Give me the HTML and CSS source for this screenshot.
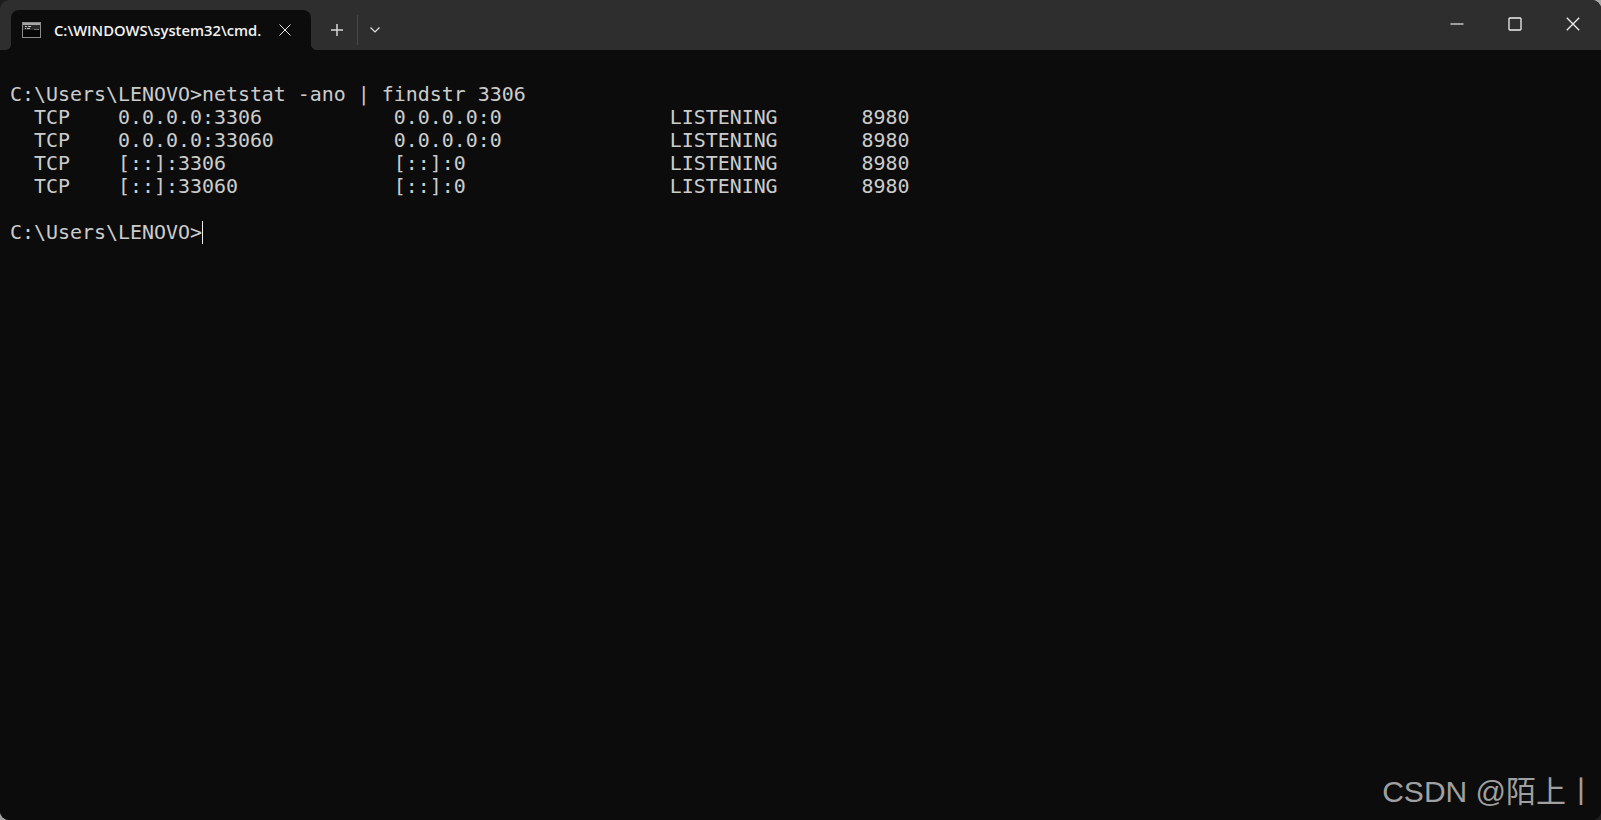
FILE: index.html
```html
<!DOCTYPE html>
<html lang="en">
<head>
<meta charset="utf-8">
<title>cmd</title>
<link rel="stylesheet" href="styles.css">
</head>
<body>
<div class="window">
  <header class="tabbar">
    <div class="tab">
      <svg class="tab-icon" width="19" height="16" viewBox="0 0 19 16">
        <rect x="0.5" y="0.5" width="18" height="15" fill="#060606" stroke="#8c8c8c"/>
        <rect x="1" y="1" width="17" height="2" fill="#a6a6a6"/>
        <rect x="1" y="3" width="17" height="5" fill="#2a2a2a"/>
        <path d="M3 4.5h2M6 4.5h3M3 6.5h1M5 6.5h3" stroke="#c4c4c4" fill="none"/>
        <path d="M12 7.5h5" stroke="#777" fill="none"/>
      </svg>
      <span class="tab-title">C:\WINDOWS\system32\cmd.</span>
      <svg class="tab-close" width="12" height="12" viewBox="0 0 12 12">
        <path d="M0.5 0.5l11 11M11.5 0.5l-11 11" stroke="#e6e6e6" stroke-width="1" fill="none"/>
      </svg>
    </div>
    <div class="tab-actions">
      <svg class="add" width="12" height="12" viewBox="0 0 12 12">
        <path d="M6 0v12M0 6h12" stroke="#d8d8d8" stroke-width="1.5" fill="none"/>
      </svg>
      <span class="divider"></span>
      <svg class="more" width="10" height="6" viewBox="0 0 10 6">
        <path d="M0.5 0.5L5 5l4.5-4.5" stroke="#e0e0e0" stroke-width="1.2" fill="none"/>
      </svg>
    </div>
    <div class="win-controls">
      <svg width="14" height="14" viewBox="0 0 14 14"><path d="M0.5 7h13" stroke="#cfcfcf" stroke-width="1.4" fill="none"/></svg>
      <svg width="14" height="14" viewBox="0 0 14 14"><rect x="1" y="1" width="12" height="12" rx="1" stroke="#f0f0f0" stroke-width="1.3" fill="none"/></svg>
      <svg width="14" height="14" viewBox="0 0 14 14"><path d="M0.8 0.8l12.4 12.4M13.2 0.8L0.8 13.2" stroke="#f0f0f0" stroke-width="1.3" fill="none"/></svg>
    </div>
  </header>
  <main class="console">
<pre class="output">

C:\Users\LENOVO&gt;netstat -ano | findstr 3306
  TCP    0.0.0.0:3306           0.0.0.0:0              LISTENING       8980
  TCP    0.0.0.0:33060          0.0.0.0:0              LISTENING       8980
  TCP    [::]:3306              [::]:0                 LISTENING       8980
  TCP    [::]:33060             [::]:0                 LISTENING       8980

C:\Users\LENOVO&gt;<span class="cursor"></span></pre>
    <div class="watermark">CSDN @陌上丨</div>
  </main>
</div>
</body>
</html>
```
FILE: styles.css
```css
* { box-sizing: border-box; }
html, body { margin: 0; height: 100%; overflow: hidden; }
body { background: conic-gradient(#a8a8a8 0 25%, #1e1e1e 25% 50%, #a0a0a0 50% 75%, #1e1e1e 75%); }
.window {
  display: flex; flex-direction: column; height: 820px; width: 1601px;
  border-radius: 9px; overflow: hidden; background: #0c0c0c;
}
.tabbar {
  height: 50px; flex: none; display: flex; align-items: flex-end;
  background: #2e2e2e; padding-left: 11px;
}
.tab {
  position: relative; width: 300px; height: 40px; background: #0c0c0c; border-radius: 8px 8px 0 0;
  display: flex; align-items: center; padding: 0 0 0 11px; flex: none;
}
.tab::before, .tab::after {
  content: ""; position: absolute; bottom: 0; width: 5px; height: 5px;
}
.tab::before { left: -5px; background: radial-gradient(circle at 0 0, #2e2e2e 4.5px, #0c0c0c 5px); }
.tab::after { right: -5px; background: radial-gradient(circle at 100% 0, #2e2e2e 4.5px, #0c0c0c 5px); }
.tab-icon { flex: none; margin-right: 13px; }
.tab-title {
  font: 600 14.75px/20px "Open Sans", sans-serif; color: #f2f2f2; width: 225px; white-space: nowrap; overflow: hidden;
}
.tab-close { flex: none; }
.tab-actions { display: flex; align-items: center; height: 40px; flex: none; }
.add { margin-left: 20px; }
.divider { width: 1px; height: 30px; background: #484848; margin: 0 12px 0 14px; }
.win-controls {
  margin-left: auto; align-self: flex-start; height: 48px;
  display: flex; align-items: center; gap: 44px; padding-right: 21px;
}
.console { flex: 1; position: relative; background: #0c0c0c; padding: 10px 0 0 10px; }
.output {
  margin: 0; font: 19.93px/23px "DejaVu Sans Mono", monospace; color: #cccccc;
}
.cursor { display: inline-block; width: 1px; height: 23px; background: #f0f0f0; vertical-align: top; }
.watermark {
  position: absolute; right: 5px; bottom: 10px;
  font: 30px/36px "Liberation Sans", "Noto Sans CJK SC", sans-serif; color: #a0a0a0;
}
```
